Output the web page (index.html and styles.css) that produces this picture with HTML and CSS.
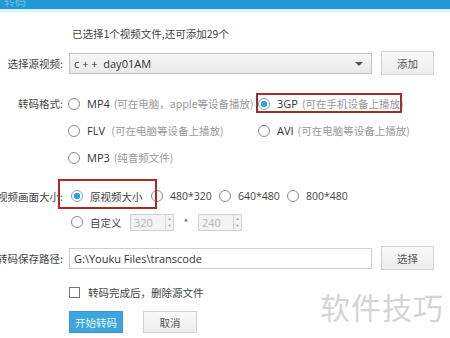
FILE: index.html
```html
<!DOCTYPE html>
<html lang="zh-CN">
<head>
  <meta charset="UTF-8" />
  <title>转码</title>
  <link rel="stylesheet" href="styles.css">
</head>
<body>
  <div class="titlebar"><span class="title">转码</span></div>
  <div class="dialog">
    <div class="info">已选择1个视频文件,还可添加29个</div>

    <div class="row source">
      <div class="lbl">选择源视频:</div>
      <div class="select">c + +&nbsp; day01AM<span class="arrow"></span></div>
      <button class="btn">添加</button>
    </div>

    <div class="row format">
      <div class="lbl">转码格式:</div>
      <div class="formats">
        <label class="opt"><span class="radio"></span><b>MP4</b><i>(可在电脑，apple等设备播放)</i></label>
        <label class="opt"><span class="radio on"></span><b>3GP</b><i>(可在手机设备上播放)</i></label>
        <label class="opt"><span class="radio"></span><b>FLV</b><i>&nbsp;(可在电脑等设备上播放)</i></label>
        <label class="opt"><span class="radio"></span><b>AVI</b><i>(可在电脑等设备上播放)</i></label>
        <label class="opt"><span class="radio"></span><b>MP3</b><i>(纯音频文件)</i></label>
      </div>
    </div>

    <div class="row size">
      <div class="lbl">视频画面大小:</div>
      <div class="sizes">
        <label class="opt w80"><span class="radio on"></span>原视频大小</label>
        <label class="opt w68"><span class="radio"></span>480*320</label>
        <label class="opt w68"><span class="radio"></span>640*480</label>
        <label class="opt"><span class="radio"></span>800*480</label>
      </div>
    </div>

    <div class="row custom">
      <div class="lbl"></div>
      <label class="opt"><span class="radio"></span>自定义</label>
      <div class="spin"><span>320</span><span class="arrows"><em>▲</em><em>▼</em></span></div>
      <span class="times">*</span>
      <div class="spin"><span>240</span><span class="arrows"><em>▲</em><em>▼</em></span></div>
    </div>

    <div class="row path">
      <div class="lbl">转码保存路径:</div>
      <div class="input">G:\Youku Files\transcode</div>
      <button class="btn">选择</button>
    </div>

    <div class="row check">
      <div class="lbl"></div>
      <label class="opt"><span class="box"></span>转码完成后，删除源文件</label>
    </div>

    <div class="row actions">
      <div class="lbl"></div>
      <button class="btn primary">开始转码</button>
      <button class="btn">取消</button>
    </div>

    <div class="mark mark-3gp"></div>
    <div class="mark mark-size"></div>
    <div class="watermark">软件技巧</div>
  </div>
</body>
</html>
```

FILE: styles.css
```css
body {
  margin: 0;
  width: 450px;
  height: 338px;
  overflow: hidden;
  background: #fff;
  font-family: "Noto Sans CJK SC", "Noto Sans", sans-serif;
  font-size: 10.5px;
  color: #444;
}
.titlebar {
  height: 9px;
  background: #1f9ad6;
  border-bottom: 3px solid #d8f1fb;
  overflow: hidden;
}
.titlebar .title {
  display: block;
  margin: -7px 0 0 4px;
  color: #6cbde6;
  font-size: 11px;
}
.dialog {
  position: relative;
  height: 314px;
  padding-top: 12px;
}
.info {
  height: 20px;
  line-height: 20px;
  padding-left: 72px;
}
.row {
  display: flex;
  align-items: center;
}
.lbl {
  width: 63px;
  margin-right: 6px;
  flex-shrink: 0;
  display: flex;
  justify-content: flex-end;
  white-space: nowrap;
}
.source {
  height: 24px;
  margin-top: 7px;
}
.select {
  position: relative;
  width: 297px;
  height: 19px;
  line-height: 19px;
  padding-left: 4px;
  border: 1px solid #c4c4c4;
  background: linear-gradient(#f6f6f6, #e9e9e9);
  color: #333;
  font-family: "Open Sans", "Noto Sans", sans-serif;
  font-size: 11px;
}
.arrow {
  position: absolute;
  right: 8px;
  top: 8px;
  border-left: 4px solid transparent;
  border-right: 4px solid transparent;
  border-top: 4px solid #555;
}
.btn {
  height: 24px;
  width: 53px;
  margin-left: 9px;
  padding: 0;
  border: 1px solid #d2d2d2;
  background: linear-gradient(#fafafa, #ededed);
  color: #555;
  font-family: inherit;
  font-size: 10.5px;
}
.format {
  align-items: flex-start;
  margin-top: 15px;
}
.format .lbl {
  height: 26px;
  align-items: center;
}
.formats {
  display: grid;
  grid-template-columns: 190px auto;
  grid-auto-rows: 27px;
  margin-left: -1px;
}
.opt {
  display: flex;
  align-items: center;
  white-space: nowrap;
}
.opt b {
  font-weight: normal;
  font-family: "Open Sans", "Noto Sans", sans-serif;
  font-size: 11px;
  color: #333;
  margin-right: 4px;
}
.opt i {
  font-style: normal;
  color: #9a9a9a;
}
.radio {
  width: 10px;
  height: 10px;
  border: 1px solid #8a8a8a;
  border-radius: 50%;
  margin-right: 7px;
  flex-shrink: 0;
  box-sizing: content-box;
  background: #fff;
}
.radio.on {
  background: radial-gradient(circle, #3b9fd9 0 3px, #fff 3.5px);
  border-color: #7aa9c8;
}
.size {
  height: 26px;
  margin-top: 12px;
}
.sizes {
  display: flex;
  margin-left: 2px;
  font-family: "Open Sans", "Noto Sans CJK SC", sans-serif;
}
.w80 {
  width: 80px;
}
.w68 {
  width: 68px;
}
.custom {
  height: 26px;
  padding-left: 2px;
}
.custom .opt {
  width: 59px;
}
.spin {
  display: flex;
  align-items: center;
  justify-content: space-between;
  width: 39px;
  height: 15px;
  padding-left: 3px;
  border: 1px solid #cfcfcf;
  background: #f3f3f3;
  color: #b5b5b5;
  font-family: "Open Sans", sans-serif;
  font-size: 11px;
}
.arrows {
  display: flex;
  flex-direction: column;
  width: 7px;
  height: 15px;
  border-left: 1px solid #d8d8d8;
}
.arrows em {
  font-style: normal;
  font-size: 4px;
  line-height: 7px;
  text-align: center;
  color: #999;
}
.times {
  width: 24px;
  text-align: center;
  color: #666;
}
.path {
  height: 24px;
  margin-top: 11px;
}
.input {
  width: 297px;
  height: 19px;
  line-height: 19px;
  padding-left: 4px;
  border: 1px solid #cfcfcf;
  background: #fff;
  color: #333;
  font-family: "Open Sans", sans-serif;
  font-size: 11px;
}
.check {
  height: 20px;
  margin-top: 12px;
}
.box {
  width: 9px;
  height: 9px;
  border: 1px solid #777;
  margin-right: 8px;
  background: #fff;
}
.actions {
  height: 22px;
  margin-top: 9px;
}
.actions .btn {
  height: 22px;
  width: 54px;
  margin-left: 0;
  margin-right: 20px;
}
.btn.primary {
  background: #3ca6dd;
  border-color: #3499cf;
  color: #e9f6fd;
}
.mark {
  position: absolute;
  border: 2px solid #a52a2a;
}
.mark-3gp {
  left: 256px;
  top: 81px;
  width: 142px;
  height: 16px;
}
.mark-size {
  left: 58px;
  top: 167px;
  width: 95px;
  height: 26px;
}
.watermark {
  position: absolute;
  right: 6px;
  top: 272px;
  font-size: 30px;
  color: #d4d4d4;
  letter-spacing: 1px;
}
```
